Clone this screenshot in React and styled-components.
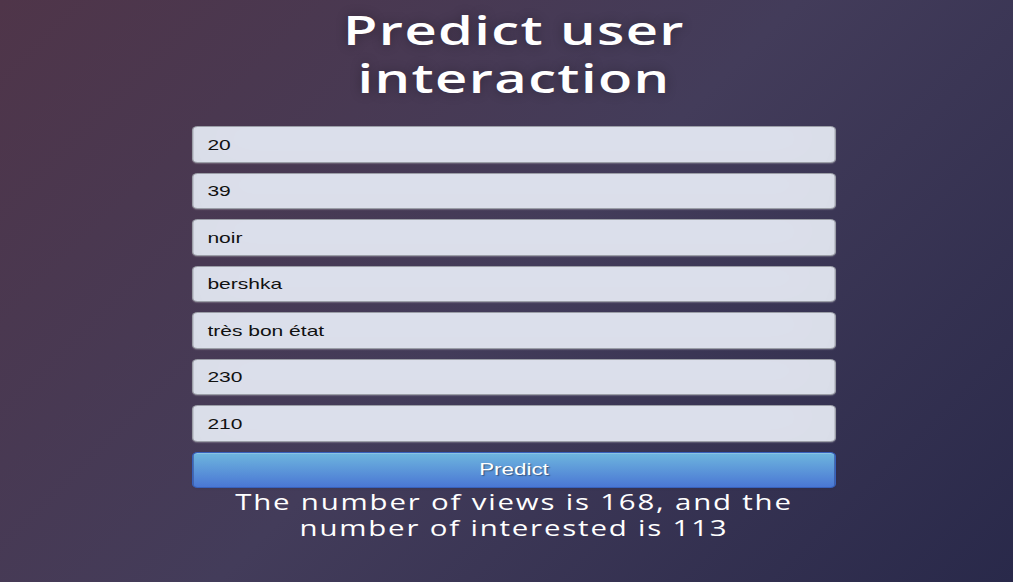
import styled, { createGlobalStyle } from "styled-components";

const GlobalStyle = createGlobalStyle`
    html, body {
        margin: 0;
        min-height: 100%;
    }
    body {
        min-height: 582px;
        background: linear-gradient(135deg, #4f3549 0%, #433c5a 50%, #29294a 100%);
        font-family: "Open Sans", "Liberation Sans", sans-serif;
        overflow: hidden;
    }
`;

const Page = styled.div`
    display: flex;
    justify-content: center;
    padding-left: 15px;
`;

// the whole card is drawn a bit wider than tall, like the original capture
const Stage = styled.div`
    width: 460px;
    display: flex;
    flex-direction: column;
    transform: scaleX(1.4);
    transform-origin: top center;
`;

const Title = styled.h1`
    margin: 6px 0 24px;
    color: #fff;
    font-size: 40px;
    line-height: 48px;
    font-weight: 600;
    letter-spacing: 1px;
    text-align: center;
    text-shadow: 0 0 10px rgba(0, 0, 0, 0.3);
`;

const Form = styled.form`
    display: flex;
    flex-direction: column;
    gap: 10px;
`;

const Field = styled.input`
    box-sizing: border-box;
    width: 100%;
    height: 36.5px;
    margin: 0;
    padding: 0 10px;
    border: 1px solid rgba(0, 0, 0, 0.3);
    border-radius: 4px;
    outline: none;
    background: #dfe3ef;
    color: #111;
    font-family: "Liberation Sans", Arial, sans-serif;
    font-size: 15px;
    box-shadow: inset 0 -5px 45px rgba(100, 100, 100, 0.06), 0 1px 1px rgba(255, 255, 255, 0.2);
`;

const Button = styled.button`
    box-sizing: border-box;
    width: 100%;
    height: 36px;
    border: 1px solid #3762bc;
    border-radius: 4px;
    background: linear-gradient(to bottom, #6eb6de, #4a77d4);
    color: #fff;
    font-family: "Liberation Sans", Arial, sans-serif;
    font-size: 16px;
    text-shadow: 1px 1px 1px rgba(0, 0, 0, 0.4);
    box-shadow: inset 0 1px 0 rgba(255, 255, 255, 0.2), 0 1px 2px rgba(0, 0, 0, 0.05);
    cursor: pointer;
`;

const Result = styled.p`
    margin: 0;
    padding-top: 1px;
    color: #fff;
    font-size: 21px;
    line-height: 26px;
    letter-spacing: 1.3px;
    text-align: center;
`;

const values = ["20", "39", "noir", "bershka", "très bon état", "230", "210"];

export default function App() {
    return (
        <>
            <GlobalStyle />
            <Page>
                <Stage>
                    <Title>Predict user interaction</Title>
                    <Form onSubmit={(e) => e.preventDefault()}>
                        {values.map((value, i) => (
                            <Field key={i} type="text" defaultValue={value} readOnly />
                        ))}
                        <Button type="submit">Predict</Button>
                    </Form>
                    <Result>
                        The number of views is 168, and the number of interested is 113
                    </Result>
                </Stage>
            </Page>
        </>
    );
}
